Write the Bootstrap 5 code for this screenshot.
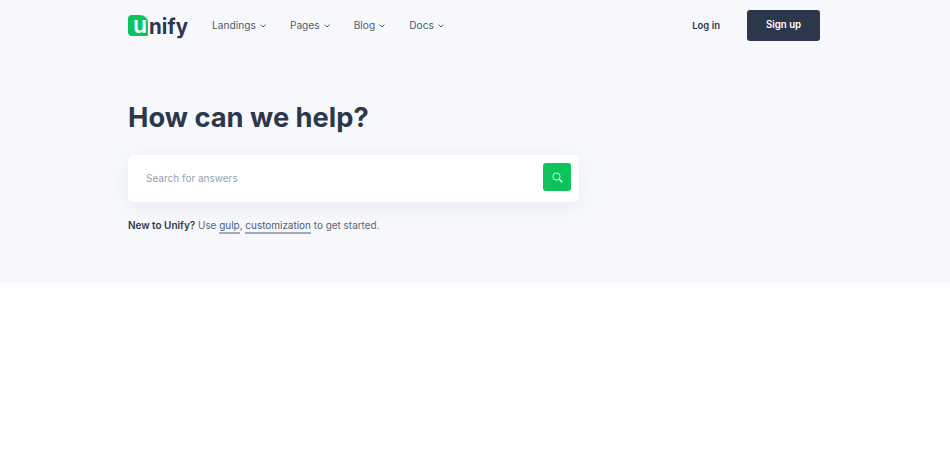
<!DOCTYPE html>
<html lang="en"><head><meta charset="utf-8"><title>Unify</title>
<link href="https://cdn.jsdelivr.net/npm/bootstrap@5.3.0/dist/css/bootstrap.min.css" rel="stylesheet">
<style>
body{font-family:Inter,"Liberation Sans",sans-serif;background:#fff;color:#2d374b;font-size:10px}
.hero-zone{background:#f6f8fc;height:283px}
.page-wrap{width:692px;margin-left:128px}
.top-bar{height:52px}
.logo-box{display:flex;align-items:flex-end;justify-content:flex-end;width:20px;height:21px;background:#0cc35c;border-radius:4px 8px 1px 4px;color:#fff;font-size:23px;font-weight:600;line-height:22px;padding-right:1px;margin-right:1px;margin-top:-4px}
.logo-txt{font-size:20.5px;font-weight:700;color:#2d374b;line-height:24px;letter-spacing:.05px}
.brand-link{text-decoration:none;margin-right:24px;margin-top:2px}
.menu-link{color:#4f5a6d;font-size:10.2px;text-decoration:none;display:flex;align-items:center;gap:4px;white-space:nowrap}
.menu-gap{margin-right:24px}
.login-link{color:#2d374b;font-weight:600;font-size:9.5px;text-decoration:none;margin-right:27px}
.signup-btn{background:#2d374b;border:0;color:#fff;font-weight:600;font-size:9.7px;width:73px;height:31px;border-radius:3px;padding:0;margin-top:-1px}
.hero-title{font-size:27.3px;font-weight:700;line-height:36px;color:#2d374b;margin:48px 0 19px}
.search-panel{width:451px;height:47px;background:#fff;border-radius:5px;box-shadow:0 5px 20px rgba(140,152,164,.13);padding:0 8px 0 18px}
.search-field{border:0;outline:0;flex:1;font-size:10px;font-family:inherit;background:transparent;padding:0}
.search-field::placeholder{color:#97a0af;opacity:1}
.search-btn{width:28px;height:28px;background:#0cc35c;border:0;border-radius:3px;padding:0;margin-bottom:3px}
.help-line{margin:16px 0 0;font-size:9.95px;line-height:14px;color:#5a6577}
.help-line strong{color:#2d374b;font-weight:600}
.help-line a{color:#4f5a6d;text-decoration:none;border-bottom:2px solid #a3aab8;padding-bottom:1px}
.help-line a.first-link{color:#3f5c8a}
</style></head>
<body>
<div class="hero-zone">
<div class="page-wrap">
<header class="top-bar d-flex align-items-center">
<a class="brand-link d-flex align-items-center" href="#"><span class="logo-box">u</span><span class="logo-txt">nify</span></a>
<nav class="d-flex align-items-center">
<a class="menu-link menu-gap" href="#">Landings <svg width="6" height="4" viewBox="0 0 6 4" fill="none" stroke="#4f5a6d" stroke-width="1"><path d="M.6.6 3 3 5.4.6"/></svg></a>
<a class="menu-link menu-gap" href="#">Pages <svg width="6" height="4" viewBox="0 0 6 4" fill="none" stroke="#4f5a6d" stroke-width="1"><path d="M.6.6 3 3 5.4.6"/></svg></a>
<a class="menu-link menu-gap" href="#">Blog <svg width="6" height="4" viewBox="0 0 6 4" fill="none" stroke="#4f5a6d" stroke-width="1"><path d="M.6.6 3 3 5.4.6"/></svg></a>
<a class="menu-link" href="#">Docs <svg width="6" height="4" viewBox="0 0 6 4" fill="none" stroke="#4f5a6d" stroke-width="1"><path d="M.6.6 3 3 5.4.6"/></svg></a>
</nav>
<div class="ms-auto d-flex align-items-center">
<a class="login-link" href="#">Log in</a>
<button class="signup-btn" type="button">Sign up</button>
</div>
</header>
<h1 class="hero-title">How can we help?</h1>
<form class="search-panel d-flex align-items-center">
<input class="search-field" type="text" placeholder="Search for answers">
<button class="search-btn d-flex align-items-center justify-content-center" type="button" aria-label="Search">
<svg width="11" height="11" viewBox="0 0 11 11" fill="none" stroke="#fff"><circle cx="4.5" cy="4.5" r="3.6" stroke-opacity=".8"/><path d="M7.3 7.3 10.3 10.3" stroke-width="1.3"/></svg>
</button>
</form>
<p class="help-line"><strong>New to Unify?</strong> Use <a class="first-link" href="#">gulp</a>, <a href="#">customization</a> to get started.</p>
</div>
</div>
</body></html>
